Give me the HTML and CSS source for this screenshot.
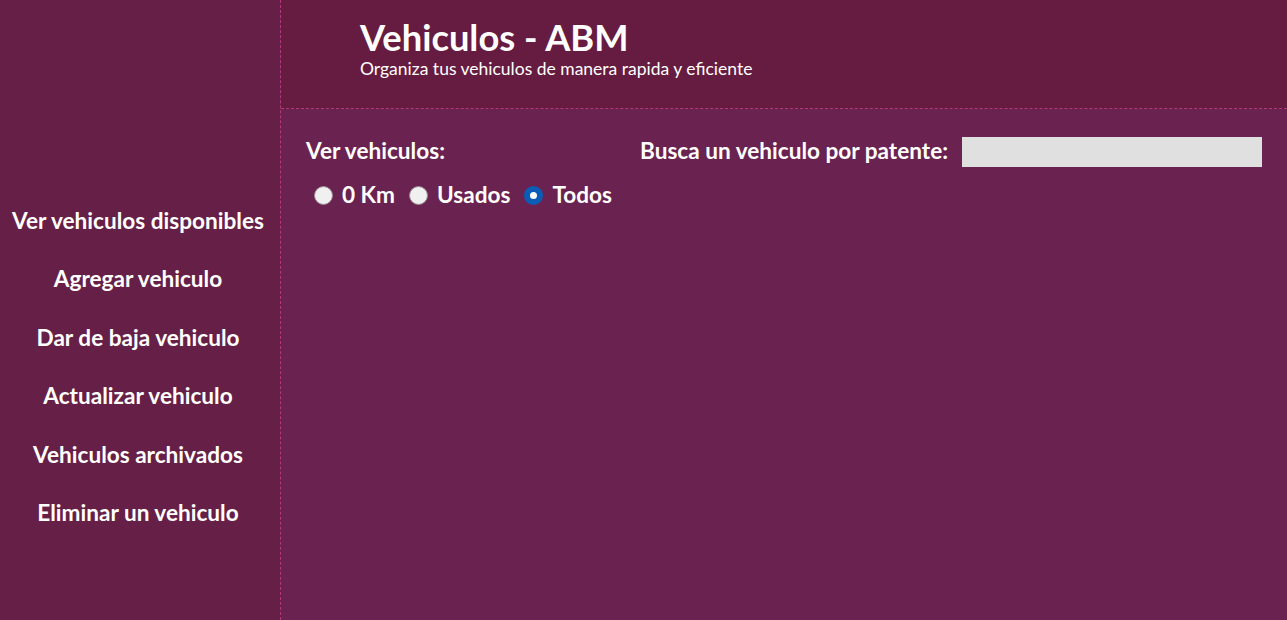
FILE: index.html
```html
<!DOCTYPE html>
<html lang="es">
<head>
<meta charset="utf-8">
<title>Vehiculos - ABM</title>
<link rel="stylesheet" href="styles.css">
</head>
<body>
<div class="app">
  <nav class="sidebar">
    <a class="nav-link" href="#">Ver vehiculos disponibles</a>
    <a class="nav-link" href="#">Agregar vehiculo</a>
    <a class="nav-link" href="#">Dar de baja vehiculo</a>
    <a class="nav-link" href="#">Actualizar vehiculo</a>
    <a class="nav-link" href="#">Vehiculos archivados</a>
    <a class="nav-link" href="#">Eliminar un vehiculo</a>
  </nav>
  <div class="content">
    <header class="header">
      <h1 class="title">Vehiculos - ABM</h1>
      <p class="subtitle">Organiza tus vehiculos de manera rapida y eficiente</p>
    </header>
    <main class="main">
      <div class="filter">
        <div class="label">Ver vehiculos:</div>
        <div class="radios">
          <label class="radio"><input type="radio" name="tipo"> 0 Km</label>
          <label class="radio"><input type="radio" name="tipo"> Usados</label>
          <label class="radio"><input type="radio" name="tipo" checked> Todos</label>
        </div>
      </div>
      <div class="search">
        <label class="label" for="patente">Busca un vehiculo por patente:</label>
        <input class="search-input" id="patente" type="text">
      </div>
    </main>
  </div>
</div>
</body>
</html>
```
FILE: styles.css
```css
* { box-sizing: border-box; }
html, body { margin: 0; height: 100%; }
body {
  font-family: Lato, "Open Sans", sans-serif;
  color: #fff;
  background: #6a2350;
}
.app { display: flex; height: 620px; }
.sidebar {
  width: 281px;
  flex-shrink: 0;
  background: #662047;
  border-right: 1px dashed #b33a78;
  display: flex;
  flex-direction: column;
  align-items: center;
  padding-top: 206px;
  gap: 28.4px;
}
.nav-link {
  color: #fff;
  text-decoration: none;
  font-weight: bold;
  font-size: 22.6px;
  line-height: 30px;
  padding-right: 4px;
}
.content { flex: 1; display: flex; flex-direction: column; }
.header {
  height: 109px;
  background: #661c40;
  border-bottom: 1px dashed #b33a78;
  padding: 16px 0 0 79px;
}
.title {
  margin: 0;
  font-size: 36.3px;
  line-height: 42px;
  font-weight: bold;
}
.subtitle {
  margin: 0;
  font-size: 17.5px;
  line-height: 22px;
}
.main {
  flex: 1;
  background: #6a2350;
  display: flex;
  padding: 27px 24px 0 25px;
}
.filter { width: 334px; }
.label { font-size: 22.6px; font-weight: bold; line-height: 30px; }
.radios { display: flex; gap: 14px; margin-top: 14px; padding-left: 8px; }
.radio {
  display: flex;
  align-items: center;
  font-size: 22.6px;
  font-weight: bold;
  line-height: 30px;
  gap: 9px;
}
.radio input {
  appearance: none;
  margin: 0;
  width: 19px;
  height: 19px;
  border-radius: 50%;
  background: #f0f0f0;
  border: 1px solid #9a8a94;
}
.radio input:checked {
  background: #fff;
  border: 6.5px solid #0b5cb5;
}
.search { display: flex; align-items: flex-start; gap: 14px; }
.search-input {
  width: 300px;
  height: 30px;
  border: none;
  background: #e0e0e0;
  margin-top: 1px;
}
```
